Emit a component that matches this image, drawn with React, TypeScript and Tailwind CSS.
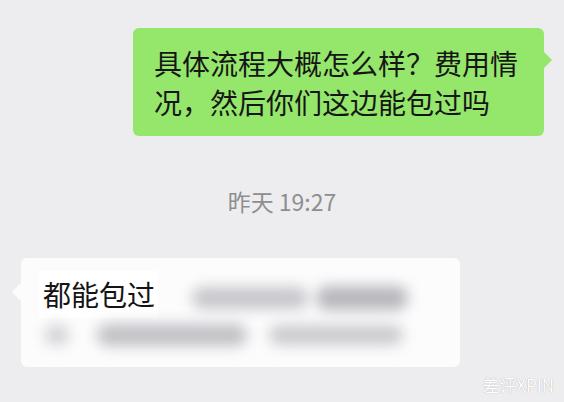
export default function App() {
  return (
    <div
      className="relative w-[564px] h-[402px] overflow-hidden bg-[#ededef] flex flex-col"
      style={{ fontFamily: '"Noto Sans CJK SC", "Noto Sans", sans-serif' }}
    >
      {/* Outgoing message */}
      <div className="flex justify-end pt-[28px] pr-[20px]">
        <div className="relative w-[411px] rounded-[6px] bg-[#95e76b] pl-[21px] pr-[10px] pt-[16px] pb-[14px]">
          <p className="text-[28px] leading-[39px] text-[#161616]">
            具体流程大概怎么样？费用情
            <br />
            况，然后你们这边能包过吗
          </p>
          <span className="absolute right-[-8px] top-[24px] h-0 w-0 border-y-[8px] border-l-[8px] border-y-transparent border-l-[#95e76b]" />
        </div>
      </div>

      {/* Timestamp */}
      <div className="mt-[50px] flex justify-center">
        <span className="text-[23px] leading-[30px] text-[#8e8e90]">昨天 19:27</span>
      </div>

      {/* Incoming message */}
      <div className="mt-[42px] pl-[21px]">
        <div className="relative w-[439px] h-[109px] rounded-[6px] bg-[#fcfcfd] pl-[18px] pt-[13px]">
          <span className="absolute left-[-9px] top-[25px] h-0 w-0 border-y-[9px] border-r-[9px] border-y-transparent border-r-[#fcfcfd]" />
          <div className="flex items-center">
            <span className="bg-white pl-[4px] pr-[3px] text-[28px] leading-[47px] text-[#141414]">都能包过</span>
            <div className="ml-[34px] mt-[6px] flex items-center gap-[8px] blur-[7px]">
              <div className="h-[22px] w-[116px] rounded-full bg-[#c6c6cb]" />
              <div className="h-[24px] w-[92px] rounded-full bg-[#b6b6bc]" />
            </div>
          </div>
          <div className="mt-[6px] flex items-center blur-[7px]">
            <div className="ml-[6px] h-[20px] w-[24px] rounded-full bg-[#d0d0d4]" />
            <div className="ml-[28px] h-[22px] w-[150px] rounded-full bg-[#c0c0c5]" />
            <div className="ml-[22px] h-[20px] w-[134px] rounded-full bg-[#cacace]" />
          </div>
        </div>
      </div>

      {/* Watermark */}
      <span className="absolute right-[10px] bottom-[8px] text-[17px] leading-[18px] text-white [text-shadow:0_0_1px_#9a9a9a]">
        差评XPIN
      </span>
    </div>
  );
}
